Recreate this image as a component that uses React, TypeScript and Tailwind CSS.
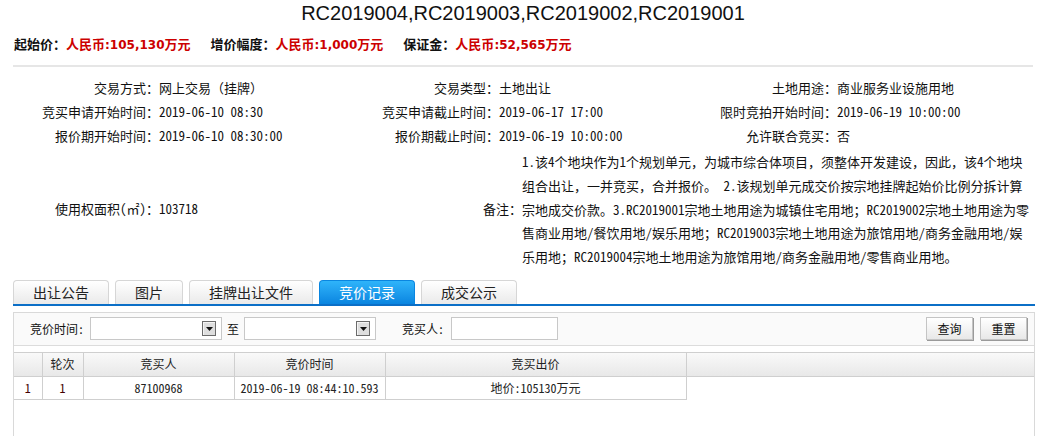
import React from "react";

const CJK = "font-['Noto_Sans_Mono_CJK_SC','Noto_Sans_CJK_SC',sans-serif]";

const infoRows: [string, string][][] = [
  [
    ["交易方式：", "网上交易（挂牌）"],
    ["交易类型：", "土地出让"],
    ["土地用途：", "商业服务业设施用地"],
  ],
  [
    ["竞买申请开始时间：", "2019-06-10 08:30"],
    ["竞买申请截止时间：", "2019-06-17 17:00"],
    ["限时竞拍开始时间：", "2019-06-19 10:00:00"],
  ],
  [
    ["报价期开始时间：", "2019-06-10 08:30:00"],
    ["报价期截止时间：", "2019-06-19 10:00:00"],
    ["允许联合竞买：", "否"],
  ],
];

const remark = [
  "1.该4个地块作为1个规划单元，为城市综合体项目，须整体开发建设，因此，该4个地块",
  "组合出让，一并竞买，合并报价。 2.该规划单元成交价按宗地挂牌起始价比例分拆计算",
  "宗地成交价款。3.RC2019001宗地土地用途为城镇住宅用地；RC2019002宗地土地用途为零",
  "售商业用地/餐饮用地/娱乐用地；RC2019003宗地土地用途为旅馆用地/商务金融用地/娱",
  "乐用地；RC2019004宗地土地用途为旅馆用地/商务金融用地/零售商业用地。",
];

const tabs = [
  { name: "出让公告" },
  { name: "图片" },
  { name: "挂牌出让文件" },
  { name: "竞价记录", active: true },
  { name: "成交公示" },
];

function Price({ label, amount }: { label: string; amount: string }) {
  return (
    <span className="whitespace-nowrap">
      <span className="text-[#111]">{label}</span>
      <span className="text-[#cc0000]">
        人民币
        <span className="font-['DejaVu_Sans',sans-serif] text-[12px]">:{amount}</span>
        万元
      </span>
    </span>
  );
}

function DateSelect() {
  return (
    <div className="flex h-[23px] w-[132px] items-center justify-end border border-[#c8c8c8] bg-white pr-[5px]">
      <div className="flex h-[15px] w-[14px] items-center justify-center border border-[#6b6b6b] bg-[#dedede] shadow-[inset_1px_1px_0_#f4f4f4]">
        <svg width="7" height="4" viewBox="0 0 7 4">
          <path d="M0 0h7L3.5 4z" fill="#111" />
        </svg>
      </div>
    </div>
  );
}

function Btn({ children }: { children: React.ReactNode }) {
  return (
    <button className="h-[23px] w-[47px] border border-[#c4c4c4] bg-linear-to-b from-white to-[#e8e8e8] text-[12px] text-[#111] shadow-[1px_1px_0_#9a9a9a]">
      {children}
    </button>
  );
}

export default function App() {
  return (
    <div className={`h-[436px] w-[1046px] overflow-hidden bg-white ${CJK} text-[#111]`}>
      <div className="text-center font-['Liberation_Sans',sans-serif] text-[20px] leading-[27px] text-[#111]">
        RC2019004,RC2019003,RC2019002,RC2019001
      </div>

      <div className="mt-[8px] flex gap-[20px] pl-[14px] font-['Noto_Sans_CJK_SC',sans-serif] text-[13px] font-bold leading-[18px]">
        <Price label="起始价：" amount="105,130" />
        <Price label="增价幅度：" amount="1,000" />
        <Price label="保证金：" amount="52,565" />
      </div>

      <div className="mx-[13px] mt-[11px] h-[2px] bg-[#e6e6e6]" />

      <div className="mx-[13px] mt-[9px] grid grid-cols-[146px_200px_140px_200px_138px_1fr] auto-rows-[24px] items-center text-[13px] whitespace-nowrap">
        {infoRows.flat().map(([label, value]) => (
          <React.Fragment key={label}>
            <div className="text-right">{label}</div>
            <div>{value}</div>
          </React.Fragment>
        ))}
      </div>

      <div className="mx-[13px] grid grid-cols-[146px_200px_163px_1fr] items-center text-[13px] whitespace-nowrap">
        <div className="text-right">使用权面积(㎡)：</div>
        <div>103718</div>
        <div className="text-right">备注：</div>
        <div className="pt-[2px] leading-[23.8px]">
          {remark.map((line) => (
            <div key={line}>{line}</div>
          ))}
        </div>
      </div>

      <div className="ml-[13px] w-[1022px]">
        <div className="mt-[11px] flex gap-[6px] border-b-2 border-[#0b6fc7] font-['Noto_Sans_CJK_SC',sans-serif] text-[14px]">
          {tabs.map((t) => (
            <div
              key={t.name}
              className={
                t.active
                  ? "flex h-[24px] items-center rounded-t-[4px] border border-b-0 border-[#0a86e0] bg-linear-to-b from-[#2fb4fa] to-[#0985e0] px-[19px] text-white"
                  : "flex h-[24px] items-center rounded-t-[4px] border border-b-0 border-[#d6d6d6] bg-linear-to-b from-white to-[#eaeaea] px-[19px] text-[#222]"
              }
            >
              {t.name}
            </div>
          ))}
        </div>

        <div className="mt-[6px] h-[200px] border border-b-0 border-[#d9d9d9]">
          <div className="flex h-[33px] items-center border-b border-[#dcdcdc] bg-[#fafafa] pl-[16px] pr-[7px] text-[12px]">
            <span>竞价时间:</span>
            <div className="ml-[6px]">
              <DateSelect />
            </div>
            <span className="mx-[5px]">至</span>
            <DateSelect />
            <span className="ml-[26px]">竞买人:</span>
            <input className="ml-[7px] h-[23px] w-[107px] border border-[#c8c8c8] bg-white outline-none" />
            <div className="ml-auto flex gap-[7px]">
              <Btn>查询</Btn>
              <Btn>重置</Btn>
            </div>
          </div>

          <table className="mt-[6px] w-full border-collapse text-[12px] text-[#222]">
            <thead>
              <tr className="h-[24px] bg-linear-to-b from-[#fafafa] to-[#e8e8e8]">
                <th className="w-[28px] border-y border-r border-[#cfcfcf] font-normal"></th>
                <th className="w-[41px] border border-[#cfcfcf] font-normal">轮次</th>
                <th className="w-[151px] border border-[#cfcfcf] font-normal">竞买人</th>
                <th className="w-[151px] border border-[#cfcfcf] font-normal">竞价时间</th>
                <th className="w-[301px] border border-[#cfcfcf] font-normal">竞买出价</th>
                <th className="border-y border-l border-[#cfcfcf] font-normal"></th>
              </tr>
            </thead>
            <tbody>
              <tr className="h-[23px] text-center">
                <td className="border-b border-r border-[#cfcfcf] text-[#400]">1</td>
                <td className="border border-t-0 border-[#cfcfcf] text-[#400]">1</td>
                <td className="border border-t-0 border-[#cfcfcf]">87100968</td>
                <td className="border border-t-0 border-[#cfcfcf]">2019-06-19 08:44:10.593</td>
                <td className="border border-t-0 border-[#cfcfcf]">地价:105130万元</td>
                <td className="border-l border-[#cfcfcf]"></td>
              </tr>
            </tbody>
          </table>
        </div>
      </div>
    </div>
  );
}
